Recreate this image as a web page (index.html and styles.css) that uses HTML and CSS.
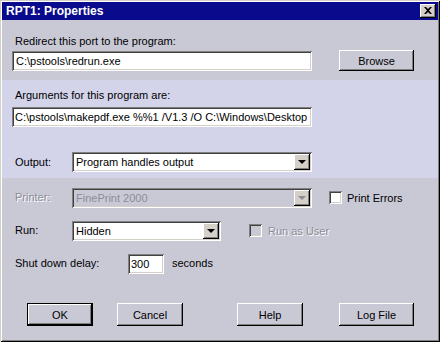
FILE: index.html
```html
<!DOCTYPE html>
<html lang="en">
<head>
  <meta charset="UTF-8">
  <title>RPT1: Properties</title>
  <link rel="stylesheet" href="styles.css">
</head>
<body>
  <div class="janela">
    <div class="titulo">
      <span>RPT1: Properties</span>
      <div class="fechar">
        <svg width="8" height="7" viewBox="0 0 8 7"><path d="M0 0h2l2 2 2-2h2L5 3.5 8 7H6L4 5 2 7H0l3-3.5z" fill="#000"/></svg>
      </div>
    </div>

    <div class="secao secao-topo">
      <div class="rotulo">Redirect this port to the program:</div>
      <div class="linha">
        <div class="campo campo-longo">C:\pstools\redrun.exe</div>
        <div class="botao botao-browse">Browse</div>
      </div>
    </div>

    <div class="secao secao-faixa">
      <div class="rotulo">Arguments for this program are:</div>
      <div class="campo campo-longo campo-args">C:\pstools\makepdf.exe %%1 /V1.3 /O C:\Windows\Desktop</div>
      <div class="linha linha-output">
        <div class="rotulo rotulo-col">Output:</div>
        <div class="combo combo-longo">
          <span>Program handles output</span>
          <div class="seta"><i></i></div>
        </div>
      </div>
    </div>

    <div class="secao secao-base">
      <div class="linha">
        <div class="rotulo rotulo-col desativado">Printer:</div>
        <div class="combo combo-longo combo-off">
          <span>FinePrint 2000</span>
          <div class="seta"><i></i></div>
        </div>
        <div class="check check-erros"><div class="caixa"></div><span>Print Errors</span></div>
      </div>
      <div class="linha linha-run">
        <div class="rotulo rotulo-col">Run:</div>
        <div class="combo combo-curto">
          <span>Hidden</span>
          <div class="seta"><i></i></div>
        </div>
        <div class="check check-user desativado"><div class="caixa caixa-off"></div><span>Run as User</span></div>
      </div>
      <div class="linha linha-delay">
        <div class="rotulo rotulo-delay">Shut down delay:</div>
        <div class="campo campo-delay">300</div>
        <div class="rotulo sufixo">seconds</div>
      </div>

      <div class="botoes">
        <div class="botao botao-ok">OK</div>
        <div class="botao botao-cancel">Cancel</div>
        <div class="botao botao-help">Help</div>
        <div class="botao botao-log">Log File</div>
      </div>
    </div>
  </div>
</body>
</html>
```

FILE: styles.css
```css
/* Janela de propriedades estilo Win98 */
body {
  margin: 0;
  font-family: 'Liberation Sans', Arial, sans-serif;
  font-size: 11px;
  color: #000;
  background: #c9c9d6;
}

.janela {
  width: 440px;
  height: 342px;
  box-sizing: border-box;
  padding: 2px;
  background: #c9c9d6;
  box-shadow: inset 1px 1px #d4d0c8, inset -1px -1px #000, inset 2px 2px #fff, inset -2px -2px #808080;
  overflow: hidden;
}

.titulo {
  height: 18px;
  background: #0a0a8c;
  color: white;
  font-weight: bold;
  font-size: 12px;
  display: flex;
  align-items: center;
  justify-content: space-between;
  padding: 0 2px 0 4px;
}

.fechar {
  width: 16px;
  height: 14px;
  box-sizing: border-box;
  background: #d4d0c8;
  box-shadow: inset -1px -1px #000, inset 1px 1px #fff, inset -2px -2px #808080;
  display: flex;
  align-items: center;
  justify-content: center;
  padding-bottom: 1px;
}

.secao {
  padding-left: 10px;
}

.secao-topo {
  padding-top: 15px;
  height: 60px;
  box-sizing: border-box;
}

.secao-faixa {
  background: #d3d3ea;
  padding-top: 9px;
  height: 98px;
  box-sizing: border-box;
}

.secao-base {
  padding-top: 7px;
}

.rotulo {
  height: 13px;
  line-height: 13px;
  padding-left: 3px;
  white-space: nowrap;
}

.rotulo-col {
  width: 57px;
}

.desativado {
  color: #8c8c98;
  text-shadow: 1px 1px #fff;
}

.linha {
  display: flex;
  align-items: center;
  height: 21px;
  margin-top: 2px;
}

.linha-output {
  margin-top: 25px;
  height: 20px;
}

.linha-run {
  margin-top: 12px;
}

.linha-delay {
  margin-top: 12px;
}

.campo {
  height: 20px;
  box-sizing: border-box;
  background: white;
  box-shadow: inset 1px 1px #808080, inset -1px -1px #fff, inset 2px 2px #404040, inset -2px -2px #d4d0c8;
  line-height: 20px;
  padding-left: 4px;
  white-space: nowrap;
  overflow: hidden;
}

.campo-longo {
  width: 300px;
}

.campo-args {
  margin-top: 5px;
  padding-left: 3px;
}

.campo-delay {
  width: 36px;
  padding-left: 3px;
}

.rotulo-delay {
  width: 113px;
}

.sufixo {
  margin-left: 5px;
}

.combo {
  height: 20px;
  box-sizing: border-box;
  background: white;
  box-shadow: inset 1px 1px #808080, inset -1px -1px #fff, inset 2px 2px #404040, inset -2px -2px #d4d0c8;
  display: flex;
  align-items: center;
  justify-content: space-between;
  padding: 2px 2px 2px 4px;
}

.combo-longo {
  width: 240px;
}

.combo-curto {
  width: 149px;
}

.combo-off {
  background: #c9c9d6;
  color: #8c8c98;
}

.seta {
  width: 16px;
  height: 16px;
  box-sizing: border-box;
  background: #d4d0c8;
  box-shadow: inset -1px -1px #000, inset 1px 1px #fff, inset -2px -2px #808080;
  display: flex;
  align-items: center;
  justify-content: center;
}

.seta i {
  width: 0;
  height: 0;
  border-left: 4px solid transparent;
  border-right: 4px solid transparent;
  border-top: 4px solid #000;
}

.combo-off .seta i {
  border-top-color: #8c8c98;
}

.check {
  display: flex;
  align-items: center;
  white-space: nowrap;
}

.check-erros {
  margin-left: 17px;
}

.check-user {
  margin-left: 28px;
}

.caixa {
  width: 13px;
  height: 13px;
  box-sizing: border-box;
  background: white;
  box-shadow: inset 1px 1px #808080, inset -1px -1px #fff, inset 2px 2px #404040, inset -2px -2px #d4d0c8;
  margin-right: 5px;
}

.caixa-off {
  background: #c9c9d6;
  margin-right: 6px;
}

.botao {
  height: 21px;
  box-sizing: border-box;
  background: #c9c9d6;
  box-shadow: inset -1px -1px #000, inset 1px 1px #fff, inset -2px -2px #808080;
  display: flex;
  align-items: center;
  justify-content: center;
}

.botao-browse {
  width: 75px;
  margin-left: 27px;
  height: 21px;
}

.botoes {
  display: flex;
  margin-top: 29px;
  padding-left: 15px;
}

.botoes .botao {
  height: 23px;
  width: 66px;
}

.botao-ok {
  border: 1px solid #000;
}

.botao-cancel {
  margin-left: 24px;
}

.botao-help {
  margin-left: 54px;
}

.botoes .botao-log {
  margin-left: 36px;
  width: 75px;
}
```
